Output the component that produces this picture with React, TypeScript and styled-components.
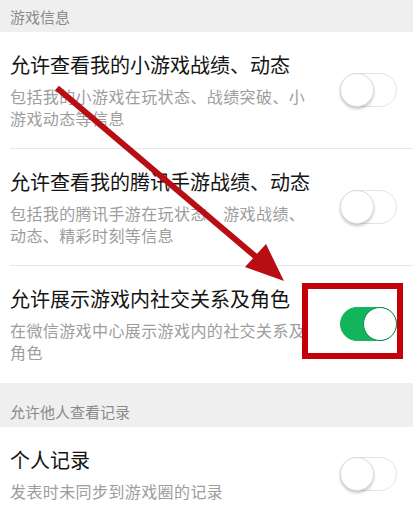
import styled, { createGlobalStyle } from 'styled-components';

type Setting = {
  title: string;
  desc: string;
  on: boolean;
  last?: boolean;
};

const gameSettings: Setting[] = [
  {
    title: '允许查看我的小游戏战绩、动态',
    desc: '包括我的小游戏在玩状态、战绩突破、小游戏动态等信息',
    on: false,
  },
  {
    title: '允许查看我的腾讯手游战绩、动态',
    desc: '包括我的腾讯手游在玩状态、游戏战绩、动态、精彩时刻等信息',
    on: false,
  },
  {
    title: '允许展示游戏内社交关系及角色',
    desc: '在微信游戏中心展示游戏内的社交关系及角色',
    on: true,
    last: true,
  },
];

const SettingRow = ({ title, desc, on, last }: Setting) => {
  return (
    <Row $last={last}>
      <Texts>
        <Title>{title}</Title>
        <Desc>{desc}</Desc>
      </Texts>
      <Toggle $on={on}>
        <Knob $on={on} />
      </Toggle>
    </Row>
  );
};

const App = () => {
  return (
    <Page>
      <GlobalStyle />
      <Band $top={7}>游戏信息</Band>
      {gameSettings.map((s) => (
        <SettingRow key={s.title} {...s} />
      ))}
      <Band $top={19}>允许他人查看记录</Band>
      <SettingRow title="个人记录" desc="发表时未同步到游戏圈的记录" on={false} last />

      <Highlight />
      <Arrow viewBox="0 0 413 515">
        <line x1="57" y1="88" x2="262" y2="262" stroke="#b80d12" strokeWidth="6" />
        <polygon points="284,281 245,267 266,244" fill="#b80d12" />
      </Arrow>
    </Page>
  );
};

export default App;

const GlobalStyle = createGlobalStyle`
  html, body {
    margin: 0;
    padding: 0;
    background: #ffffff;
  }
  body {
    font-family: 'Noto Sans CJK SC', 'Noto Sans', sans-serif;
  }
`;

const Page = styled.div`
  position: relative;
  width: 413px;
  height: 515px;
  overflow: hidden;
  background: #ffffff;
`;

const Band = styled.div<{ $top: number }>`
  background: #efeff0;
  color: #8a8a8a;
  font-size: 15px;
  line-height: 20px;
  padding: ${(p) => p.$top}px 10px 5px;
`;

const Row = styled.div<{ $last?: boolean }>`
  display: flex;
  align-items: center;
  justify-content: space-between;
  padding: 19px 16px 20px 10px;
  position: relative;

  &::after {
    content: '';
    display: ${(p) => (p.$last ? 'none' : 'block')};
    position: absolute;
    left: 10px;
    right: 0;
    bottom: 0;
    height: 1px;
    background: #e8e8e8;
  }
`;

const Texts = styled.div`
  width: 300px;
  display: flex;
  flex-direction: column;
  gap: 6px;
`;

const Title = styled.div`
  font-size: 20px;
  line-height: 28px;
  color: #141414;
`;

const Desc = styled.div`
  font-size: 16px;
  line-height: 22px;
  letter-spacing: 0.4px;
  color: #9d9d9d;
`;

const Toggle = styled.div<{ $on: boolean }>`
  position: relative;
  flex-shrink: 0;
  box-sizing: border-box;
  width: 57px;
  height: 34px;
  border-radius: 17px;
  background: ${(p) => (p.$on ? '#12b55c' : '#ffffff')};
  border: 1.5px solid ${(p) => (p.$on ? '#12b55c' : '#e4e4e4')};
`;

const Knob = styled.div<{ $on: boolean }>`
  position: absolute;
  top: -1.5px;
  left: ${(p) => (p.$on ? '22px' : '-1.5px')};
  width: 34px;
  height: 34px;
  box-sizing: border-box;
  border-radius: 50%;
  background: #ffffff;
  border: ${(p) => (p.$on ? '1.5px solid #0e8f48' : '1px solid #dcdcdc')};
  box-shadow: ${(p) => (p.$on ? 'none' : '0 2px 3px rgba(0, 0, 0, 0.22)')};
`;

const Highlight = styled.div`
  position: absolute;
  left: 302px;
  top: 283px;
  width: 101px;
  height: 76px;
  box-sizing: border-box;
  border: 6px solid #c40008;
  pointer-events: none;
`;

const Arrow = styled.svg`
  position: absolute;
  left: 0;
  top: 0;
  width: 413px;
  height: 515px;
  pointer-events: none;
`;
